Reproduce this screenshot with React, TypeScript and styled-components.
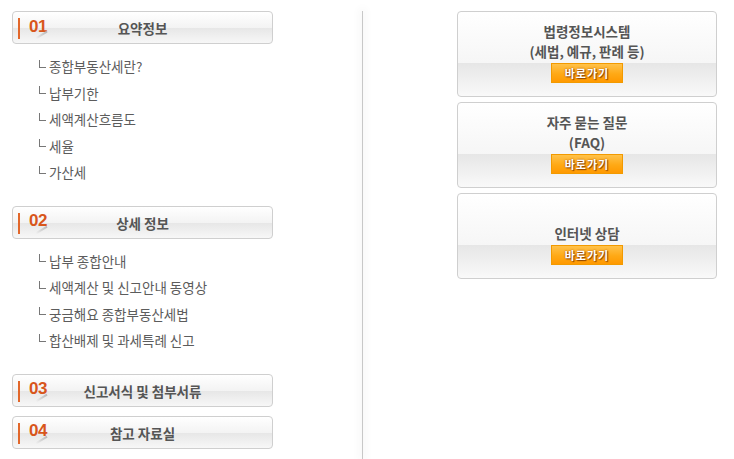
import React from 'react'
import { styled, createGlobalStyle } from 'styled-components'

const GlobalStyle = createGlobalStyle`
  html, body {
    margin: 0;
    padding: 0;
    background: #fff;
  }
  body {
    font-family: "Noto Sans CJK KR", "Noto Sans", sans-serif;
  }
`

const Page = styled.div`
  display: flex;
  height: 459px;
  box-sizing: border-box;
  padding: 11px 0 0 12px;
  overflow: hidden;
`

const LeftColumn = styled.div`
  width: 261px;
  display: flex;
  flex-direction: column;
`

const Divider = styled.div`
  width: 1px;
  margin: 0 94px 0 89px;
  background: #c8c8c8;
  box-shadow: 0 0 8px 3px rgba(0, 0, 0, 0.035);
`

const RightColumn = styled.div`
  width: 260px;
  display: flex;
  flex-direction: column;
  gap: 5px;
`

const SectionHeader = styled.div<{ $gapAfter?: number }>`
  display: grid;
  grid-template-columns: 70px 1fr 70px;
  align-items: center;
  height: 33px;
  box-sizing: border-box;
  border: 1px solid #cfcfcf;
  border-radius: 4px;
  background: linear-gradient(
    to bottom,
    #ffffff 0%,
    #f3f3f3 52%,
    #e7e7e7 53%,
    #f7f7f7 100%
  );
  margin-bottom: ${(p) => p.$gapAfter ?? 0}px;
`

const Number = styled.div`
  position: relative;
  height: 100%;
  display: flex;
  align-items: center;
  padding-left: 16px;
  font-family: "Liberation Sans", Arial, sans-serif;
  font-weight: bold;
  font-size: 17px;
  color: #d8561c;
  letter-spacing: -0.5px;
  margin-top: -2px;

  &::before {
    content: '';
    position: absolute;
    left: 5px;
    top: 7px;
    width: 2px;
    height: 21px;
    background: #e2672a;
  }

  &::after {
    content: '';
    position: absolute;
    left: 22px;
    top: 23px;
    width: 13px;
    height: 2px;
    background: linear-gradient(to right, rgba(180, 180, 180, 0), #b8b8b8);
    transform: rotate(-32deg);
  }
`

const HeaderTitle = styled.div`
  text-align: center;
  font-size: 13.5px;
  font-weight: bold;
  color: #555;
  white-space: nowrap;
  margin-top: 1px;
`

const ItemList = styled.ul`
  list-style: none;
  margin: 0;
  padding: 9px 0 20px 27px;
`

const Item = styled.li`
  display: flex;
  align-items: center;
  height: 26.5px;
  font-size: 13.5px;
  color: #5c5c5c;

  &::before {
    content: '';
    width: 6px;
    height: 7px;
    border-left: 1px solid #777;
    border-bottom: 1px solid #777;
    margin: -5px 3px 0 0;
  }
`

const LinkBox = styled.div`
  height: 86px;
  box-sizing: border-box;
  border: 1px solid #cfcfcf;
  border-radius: 4px;
  background: linear-gradient(
    to bottom,
    #ffffff 0px,
    #f6f6f6 51px,
    #e6e6e6 51px,
    #f9f9f9 100%
  );
  display: flex;
  flex-direction: column;
  align-items: center;
  justify-content: flex-end;
  padding-bottom: 13px;
`

const BoxTitle = styled.div`
  font-size: 13.5px;
  font-weight: bold;
  color: #555;
  line-height: 20px;
  text-align: center;
  margin-bottom: 2px;
`

const GoButton = styled.a`
  display: flex;
  align-items: center;
  justify-content: center;
  width: 72px;
  height: 20px;
  box-sizing: border-box;
  border: 1px solid #f29a00;
  background: linear-gradient(to bottom, #ffc24a 0%, #ffa915 55%, #ff9900 100%);
  color: #fff;
  font-size: 11px;
  font-weight: bold;
  letter-spacing: 1px;
  text-shadow: 0 0 2px #9a4a00, 1px 1px 1px #8a4200;
  text-decoration: none;
  cursor: pointer;
`

const sections = [
  {
    no: '01',
    title: '요약정보',
    items: ['종합부동산세란?', '납부기한', '세액계산흐름도', '세율', '가산세'],
  },
  {
    no: '02',
    title: '상세 정보',
    items: ['납부 종합안내', '세액계산 및 신고안내 동영상', '궁금해요 종합부동산세법', '합산배제 및 과세특례 신고'],
  },
  { no: '03', title: '신고서식 및 첨부서류', items: [] },
  { no: '04', title: '참고 자료실', items: [] },
]

const links = [
  ['법령정보시스템', '(세법, 예규, 판례 등)'],
  ['자주 묻는 질문', '(FAQ)'],
  ['인터넷 상담'],
]

export default function App() {
  return (
    <>
      <GlobalStyle />
      <Page>
        <LeftColumn>
          {sections.map((s, i) => (
            <React.Fragment key={s.no}>
              <SectionHeader $gapAfter={s.items.length === 0 && i < sections.length - 1 ? 9 : 0}>
                <Number>{s.no}</Number>
                <HeaderTitle>{s.title}</HeaderTitle>
                <div />
              </SectionHeader>
              {s.items.length > 0 && (
                <ItemList>
                  {s.items.map((item) => (
                    <Item key={item}>{item}</Item>
                  ))}
                </ItemList>
              )}
            </React.Fragment>
          ))}
        </LeftColumn>
        <Divider />
        <RightColumn>
          {links.map((lines) => (
            <LinkBox key={lines[0]}>
              <BoxTitle>
                {lines.map((l) => (
                  <div key={l}>{l}</div>
                ))}
              </BoxTitle>
              <GoButton>바로가기</GoButton>
            </LinkBox>
          ))}
        </RightColumn>
      </Page>
    </>
  )
}
